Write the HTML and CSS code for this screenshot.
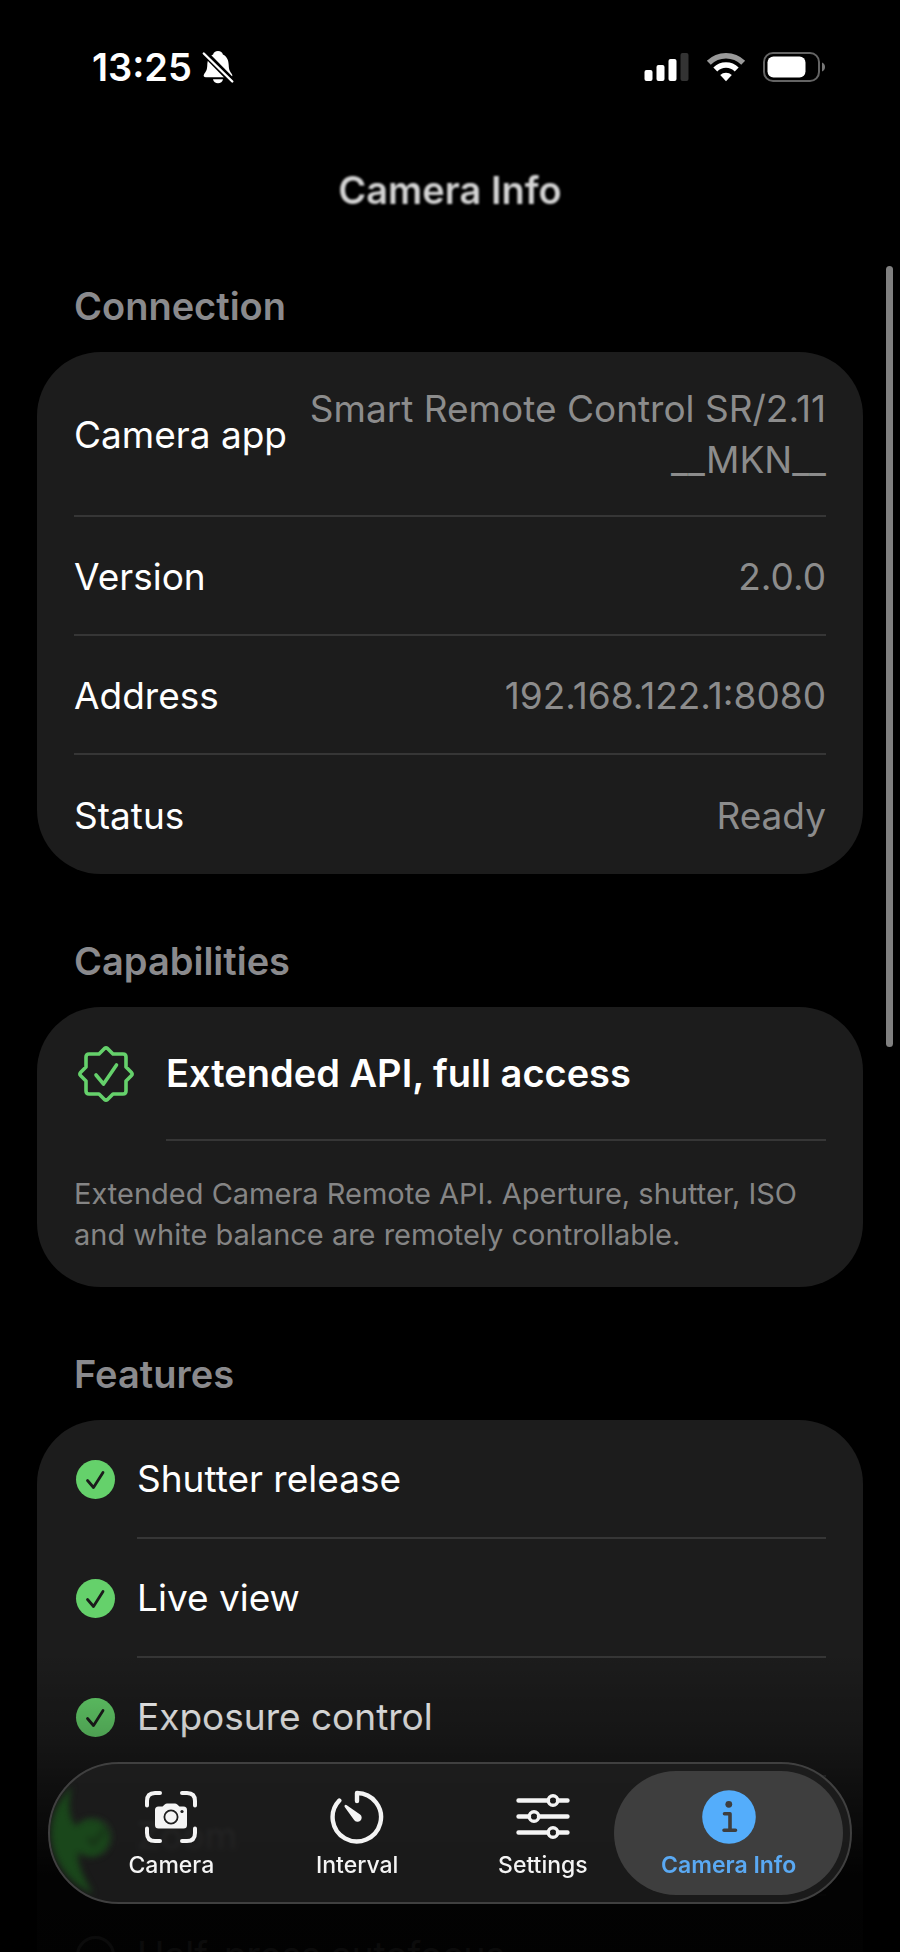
FILE: index.html
```html
<!DOCTYPE html>
<html lang="en">
  <head>
    <meta charset="UTF-8" />
    <meta name="viewport" content="width=device-width, initial-scale=1.0" />
    <title>Camera Info</title>
    <link rel="stylesheet" href="styles.css">
  </head>
  <body>
    <!-- Shared icons -->
    <svg class="sprite" aria-hidden="true">
      <symbol id="check-filled" viewBox="0 0 43 43">
        <circle cx="21.500" cy="21.500" r="19.500" fill="#65d16b" />
        <path d="M13.500 22.500l6 7 9.500-15" fill="none" stroke="#1c1c1c" stroke-width="2.800" stroke-linecap="round" stroke-linejoin="round" />
      </symbol>
    </svg>

    <div class="status-bar">
      <div class="status-left">
        <span class="time">13:25</span>
        <svg width="32" height="34" viewBox="0 0 32 34" fill="#fff" aria-label="Silent">
          <path d="M16 1c2.600 0 4.400 1.500 4.900 3.500C25 6.500 26.500 10 26.700 15c.2 5 1.300 6.500 3.100 9 1.200 1.800.4 3.300-1.600 3.300H3.800c-2 0-2.800-1.500-1.600-3.300 1.800-2.500 2.900-4 3.100-9C5.500 10 7 6.500 11.100 4.500 11.600 2.500 13.400 1 16 1z" />
          <path d="M11 29.200h10c-.5 2.500-2.500 4-5 4s-4.500-1.500-5-4z" />
          <path d="M1 1.500l30.500 31" stroke="#000" stroke-width="6.500" />
          <path d="M1.800 3.500l28.500 28" stroke="#fff" stroke-width="2.400" stroke-linecap="round" />
        </svg>
      </div>
      <div class="status-right">
        <svg width="45" height="30" viewBox="0 0 45 30" fill="#fff" aria-label="Signal">
          <rect x="0.500" y="18" width="8" height="11" rx="2" />
          <rect x="12.500" y="13" width="8" height="16" rx="2" />
          <rect x="24.500" y="7" width="8" height="22" rx="2" />
          <rect x="36.500" y="1" width="8" height="28" rx="2" fill="#333" />
        </svg>
        <svg width="40" height="30" viewBox="0 0 40 30" aria-label="Wi-Fi">
          <path d="M2.800 10.800a24.500 24.500 0 0 1 34.400 0" fill="none" stroke="#999" stroke-width="5.600" />
          <path d="M9.300 17.400a15.200 15.200 0 0 1 21.400 0" fill="none" stroke="#fff" stroke-width="5.600" />
          <path d="M20 29.200l-5.800-6.100a8.400 8.400 0 0 1 11.600 0z" fill="#fff" />
        </svg>
        <svg width="63" height="30" viewBox="0 0 63 30" aria-label="Battery">
          <rect x="1" y="1" width="55" height="28" rx="9" fill="none" stroke="#646464" stroke-width="2" />
          <rect x="4.500" y="4.500" width="38" height="21" rx="6" fill="#fff" />
          <path d="M59 10.500c4 1.500 4 7.500 0 9z" fill="#777" />
        </svg>
      </div>
    </div>

    <main class="content">
      <h1>Camera Info</h1>

      <section>
        <h2>Connection</h2>
        <dl class="card">
          <div class="row">
            <dt>Camera app</dt>
            <dd>Smart Remote Control SR/2.11<wbr>__MKN__</dd>
          </div>
          <div class="row">
            <dt>Version</dt>
            <dd>2.0.0</dd>
          </div>
          <div class="row">
            <dt>Address</dt>
            <dd>192.168.122.1:8080</dd>
          </div>
          <div class="row">
            <dt>Status</dt>
            <dd>Ready</dd>
          </div>
        </dl>
      </section>

      <section>
        <h2>Capabilities</h2>
        <div class="card">
          <div class="capability">
            <svg width="64" height="64" viewBox="0 0 64 64" fill="none" stroke="#65d16b" stroke-width="3.600" stroke-linecap="round" stroke-linejoin="round" aria-hidden="true">
              <path d="M30.500 6.500q1.500-1.200 3 0L39 12h10q3 0 3 3v10l5.500 5.500q1.200 1.500 0 3L52 39v10q0 3-3 3H39l-5.500 5.500q-1.500 1.200-3 0L25 52H15q-3 0-3-3V39l-5.500-5.500q-1.200-1.500 0-3L12 25V15q0-3 3-3h10z" />
              <path d="M22 33l7.500 9 13-19" />
            </svg>
            <strong>Extended API, full access</strong>
          </div>
          <p class="description">
            Extended Camera Remote API. Aperture, shutter, ISO and white balance are remotely controllable.
          </p>
        </div>
      </section>

      <section>
        <h2>Features</h2>
        <ul class="card features">
          <li>
            <svg width="43" height="43" aria-hidden="true"><use href="#check-filled" /></svg>
            <span>Shutter release</span>
          </li>
          <li>
            <svg width="43" height="43" aria-hidden="true"><use href="#check-filled" /></svg>
            <span>Live view</span>
          </li>
          <li>
            <svg width="43" height="43" aria-hidden="true"><use href="#check-filled" /></svg>
            <span>Exposure control</span>
          </li>
          <li>
            <svg width="43" height="43" aria-hidden="true"><use href="#check-filled" /></svg>
            <span>Zoom</span>
          </li>
          <li class="unavailable">
            <svg width="43" height="43" viewBox="0 0 43 43" fill="none" stroke="#8c8c8c" stroke-width="3" aria-hidden="true">
              <circle cx="21.500" cy="21.500" r="18" />
            </svg>
            <span>Half-press autofocus</span>
          </li>
        </ul>
      </section>
    </main>

    <div class="scrollbar"></div>
    <div class="fade"></div>

    <nav class="tab-bar">
      <!-- Green tint refracted through the left end of the glass -->
      <svg class="glow" width="80" height="138" viewBox="0 0 80 138" aria-hidden="true">
        <path d="M22 22C8 38 1 50 1 70s12 46 42 60C33 112 27 100 28 88a19 19 0 1 0-2-26c-7-8-9-22-4-40z" fill="#1a471b" />
        <path d="M38 74l6 6 10-14" fill="none" stroke="#173417" stroke-width="5" />
      </svg>

      <a class="tab" href="#camera">
        <svg width="54" height="54" viewBox="0 0 54 54" aria-hidden="true">
          <path d="M3 15.500V11q0-8 8-8h5M38 3h5q8 0 8 8v4.500M51 38.500V43q0 8-8 8h-5M16 51h-5q-8 0-8-8v-4.500" fill="none" stroke="#f4f4f4" stroke-width="4" stroke-linecap="round" />
          <path d="M14.500 16.500h4l2.500-2.300q.8-.7 2-.7h8q1.200 0 2 .7l2.500 2.300h4q3.500 0 3.500 3.500v15q0 3.500-3.500 3.500h-25Q11 38.500 11 35V20q0-3.500 3.500-3.500z" fill="#f4f4f4" />
          <circle cx="27" cy="27" r="6.600" fill="none" stroke="#1e1e1e" stroke-width="1.800" />
          <circle cx="38" cy="21.500" r="1.600" fill="#1e1e1e" />
        </svg>
        <span>Camera</span>
      </a>
      <a class="tab" href="#interval">
        <svg width="54" height="54" viewBox="0 0 54 54" aria-hidden="true">
          <path d="M27 11V3A24.200 24.200 0 1 1 9.300 10.500" fill="none" stroke="#f4f4f4" stroke-width="4.400" stroke-linecap="round" stroke-linejoin="round" />
          <path d="M14.800 15.200q.9-.9 2 0l13.300 9.300a4.100 4.100 0 1 1-6 5.400L14.700 16.900q-.6-1 .1-1.700z" fill="#f4f4f4" />
        </svg>
        <span>Interval</span>
      </a>
      <a class="tab" href="#settings">
        <svg width="54" height="54" viewBox="0 0 54 54" fill="none" stroke="#f4f4f4" stroke-width="4.400" stroke-linecap="round" aria-hidden="true">
          <path d="M2.500 10.500h29.500M42 10.500h9.500M2.500 26.500h10.500M23 26.500h28.500M2.500 42.500h29.500M42 42.500h9.500" />
          <circle cx="37" cy="10.500" r="4.800" stroke-width="3.400" />
          <circle cx="18" cy="26.500" r="4.800" stroke-width="3.400" />
          <circle cx="37" cy="42.500" r="4.800" stroke-width="3.400" />
        </svg>
        <span>Settings</span>
      </a>
      <a class="tab active" href="#info" aria-current="page">
        <svg width="54" height="54" viewBox="0 0 54 54" aria-hidden="true">
          <circle cx="27" cy="27" r="26.800" fill="#54adfb" />
          <circle cx="26.800" cy="14.300" r="3.400" fill="#3e3e3e" />
          <path d="M22.500 23.800h5.500v16M22 40.200h11.500" fill="none" stroke="#3e3e3e" stroke-width="3.600" stroke-linecap="round" stroke-linejoin="round" />
        </svg>
        <span>Camera Info</span>
      </a>
    </nav>
  </body>
</html>
```
FILE: styles.css
```css
* {
  margin: 0;
  padding: 0;
  box-sizing: border-box;
}

body {
  position: relative;
  height: 100vh;
  overflow: hidden;
  background: #000;
  color: #fff;
  font-family: Inter, "Liberation Sans", sans-serif;
  font-size: 37px;
  line-height: 51px;
}

.sprite {
  position: absolute;
  width: 0;
  height: 0;
}

svg {
  flex-shrink: 0;
}

/* Status bar */
.status-bar {
  display: flex;
  align-items: center;
  justify-content: space-between;
  height: 134px;
  padding: 0 74px 0 92px;
}

.status-left {
  display: flex;
  align-items: center;
  gap: 10px;
}

.time {
  font-size: 38px;
  font-weight: 600;
}

.status-right {
  display: flex;
  align-items: center;
  gap: 17px;
}

/* Content */
.content {
  padding: 0 37px;
}

h1 {
  margin-top: 28px;
  font-size: 38px;
  font-weight: 600;
  line-height: 57px;
  text-align: center;
  color: #d4d4d4;
  filter: blur(1px);
}

h2 {
  padding: 64px 37px 23px;
  font-size: 38px;
  font-weight: 600;
  line-height: 46px;
  color: #8a8a8d;
}

.card {
  background: #1c1c1c;
  border-radius: 64px;
  list-style: none;
}

.row {
  display: flex;
  align-items: center;
  justify-content: space-between;
  gap: 20px;
  min-height: 119px;
  margin: 0 37px;
  padding: 31px 0 30px;
  border-bottom: 2px solid #363636;
}

.row:last-child {
  border-bottom: none;
}

.row dt {
  white-space: nowrap;
}

.row dd {
  text-align: right;
  color: #8c8c8c;
}

.capability {
  display: flex;
  align-items: center;
  gap: 28px;
  margin: 0 37px;
}

.capability strong {
  flex: 1;
  border-bottom: 2px solid #363636;
  font-size: 38px;
  font-weight: 600;
  line-height: 132px;
}

.description {
  padding: 32px 37px;
  font-size: 29px;
  line-height: 41px;
  color: #858585;
}

.features li {
  display: flex;
  align-items: center;
  gap: 20px;
  margin: 0 37px;
}

.features span {
  flex: 1;
  border-bottom: 2px solid #363636;
  line-height: 117px;
}

.features .unavailable {
  color: #8c8c8c;
}

/* Overlays */
.scrollbar {
  position: absolute;
  top: 266px;
  right: 7px;
  width: 7px;
  height: 40vh;
  border-radius: 4px;
  background: #808080;
}

.fade {
  position: absolute;
  left: 0;
  right: 0;
  bottom: 0;
  height: 300px;
  background: linear-gradient(
    rgba(0, 0, 0, 0),
    rgba(0, 0, 0, 0.25) 30%,
    rgba(0, 0, 0, 0.9) 75%,
    rgba(0, 0, 0, 0.92)
  );
}

/* Tab bar */
.tab-bar {
  position: absolute;
  left: 48px;
  right: 48px;
  bottom: 48px;
  display: flex;
  padding: 7px;
  border: 2px solid #404040;
  border-radius: 71px;
  background: rgba(30, 30, 30, 0.88);
  backdrop-filter: blur(2px);
  overflow: hidden;
}

.glow {
  position: absolute;
  top: 0;
  left: 0;
  filter: blur(3px);
}

.tab {
  position: relative;
  flex: 1;
  display: flex;
  flex-direction: column;
  align-items: center;
  gap: 6px;
  padding: 19px 0 15px;
  border-radius: 62px;
  font-size: 23px;
  font-weight: 500;
  line-height: 30px;
  color: #f4f4f4;
  text-decoration: none;
}

/* Tabs overlap so the active pill can be wider than its slot */
.tab + .tab {
  margin-left: -43px;
}

.tab.active {
  background: #3e3e3e;
  color: #5aa9f3;
  font-weight: 600;
}
```
